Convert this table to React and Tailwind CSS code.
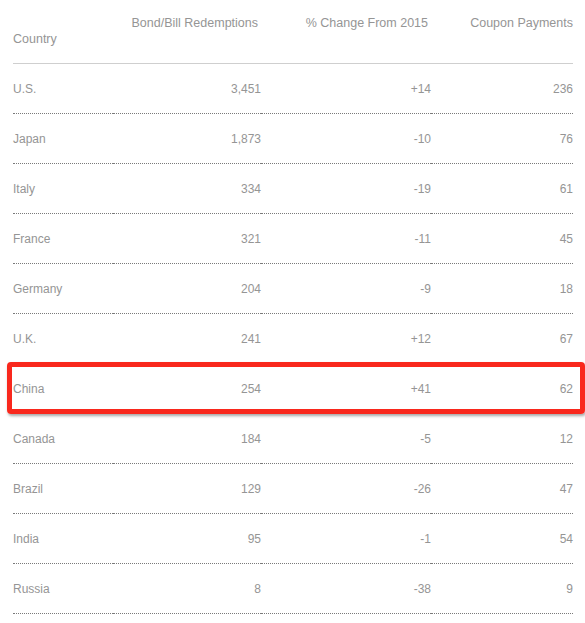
import React from 'react';

const rows = [
  ['U.S.', '3,451', '+14', '236'],
  ['Japan', '1,873', '-10', '76'],
  ['Italy', '334', '-19', '61'],
  ['France', '321', '-11', '45'],
  ['Germany', '204', '-9', '18'],
  ['U.K.', '241', '+12', '67'],
  ['China', '254', '+41', '62'],
  ['Canada', '184', '-5', '12'],
  ['Brazil', '129', '-26', '47'],
  ['India', '95', '-1', '54'],
  ['Russia', '8', '-38', '9'],
];

export default function App() {
  return (
    <div className="relative w-[585px] h-[623px] bg-white font-['Liberation_Sans',Arial,sans-serif] text-[12px] text-[#959595]">
      <div className="px-[13px] pr-[12px]">
        <table className="w-full border-collapse">
          <thead>
            <tr className="h-[63px] border-b border-[#cfcfcf] text-[12.5px]">
              <th className="w-[100px] text-left font-normal align-top pt-[30px]">Country</th>
              <th className="text-right font-normal align-top pt-[14px] pr-[3px]">Bond/Bill Redemptions</th>
              <th className="w-[170px] text-right font-normal align-top pt-[14px] pr-[3px]">% Change From 2015</th>
              <th className="w-[142px] text-right font-normal align-top pt-[14px]">Coupon Payments</th>
            </tr>
          </thead>
          <tbody>
            {rows.map((r) => (
              <tr key={r[0]} className="h-[50px] border-b border-dotted border-[#7a7a7a]">
                <td className="text-left pt-[1px]">{r[0]}</td>
                <td className="text-right pt-[1px]">{r[1]}</td>
                <td className="text-right pt-[1px]">{r[2]}</td>
                <td className="text-right pt-[1px]">{r[3]}</td>
              </tr>
            ))}
          </tbody>
        </table>
      </div>
      <div className="absolute left-[7px] top-[362px] w-[578px] h-[52px] border-[5px] border-[#f9281d] rounded-[4px] shadow-[1px_2px_3px_rgba(0,0,0,0.35)]"></div>
    </div>
  );
}
